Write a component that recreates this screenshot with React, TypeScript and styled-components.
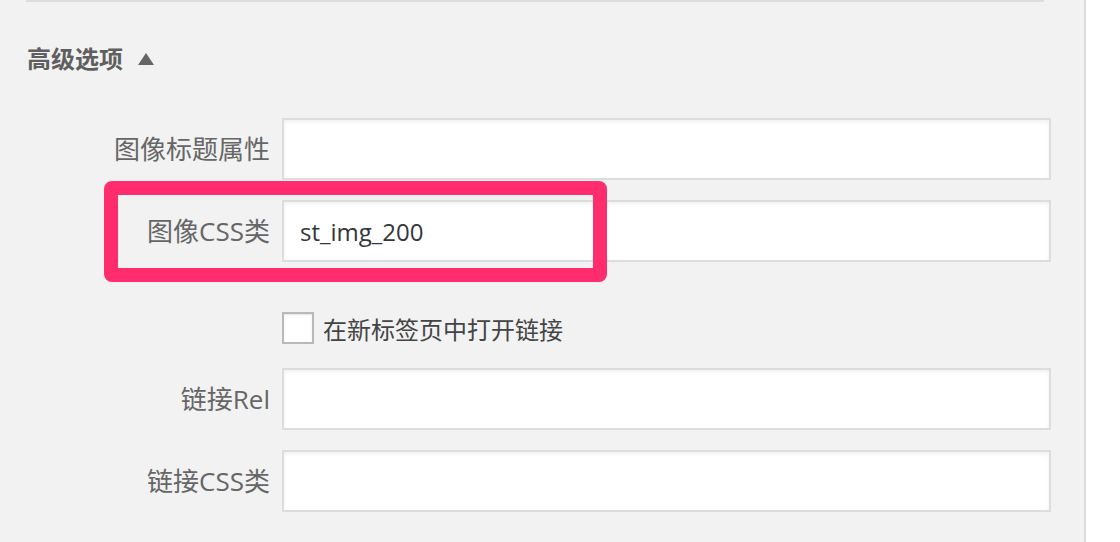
import React from "react";
import styled, { createGlobalStyle } from "styled-components";

const Global = createGlobalStyle`
  html, body { margin: 0; padding: 0; background: #fff; }
  body { font-family: "Open Sans", "Noto Sans CJK SC", sans-serif; }
  * { box-sizing: border-box; }
`;

const Page = styled.div`
  display: flex;
  width: 1120px;
  height: 542px;
  overflow: hidden;
  background: #fff;
`;

const Panel = styled.div`
  width: 1086px;
  flex: none;
  background: #f2f2f2;
  border-right: 2px solid #dddddd;
  padding: 0 0 0 26px;
  display: flex;
  flex-direction: column;
`;

const Divider = styled.div`
  width: 1018px;
  height: 2px;
  background: #dddddd;
`;

const Heading = styled.h3`
  margin: 45px 0 0 1px;
  display: flex;
  align-items: center;
  gap: 15px;
  font-size: 24px;
  line-height: 24px;
  font-weight: 700;
  color: #5f5f5f;
`;

const Triangle = styled.span`
  width: 0;
  height: 0;
  border-left: 8px solid transparent;
  border-right: 8px solid transparent;
  border-bottom: 12px solid #666;
  margin-top: -1px;
`;

const Form = styled.div`
  margin-top: 47px;
  display: flex;
  flex-direction: column;
`;

const Row = styled.div<{ $top: number }>`
  position: relative;
  display: grid;
  grid-template-columns: 244px 769px;
  column-gap: 12px;
  align-items: center;
  margin-top: ${(p) => p.$top}px;
`;

const Label = styled.label`
  text-align: right;
  font-size: 26px;
  line-height: 30px;
  color: #666;
`;

const Input = styled.div`
  height: 62px;
  background: #fff;
  border: 2px solid #dddddd;
  box-shadow: inset 0 2px 4px rgba(0, 0, 0, 0.06);
  display: flex;
  align-items: center;
  padding: 0 16px;
  font-size: 24px;
  color: #32373c;
`;

const CheckRow = styled.div`
  grid-column: 2;
  display: flex;
  align-items: center;
  gap: 9px;
  height: 32px;
`;

const Checkbox = styled.span`
  width: 32px;
  height: 32px;
  background: #fff;
  border: 2px solid #b9b9b9;
  box-shadow: inset 0 1px 2px rgba(0, 0, 0, 0.1);
`;

const CheckLabel = styled.span`
  font-size: 24px;
  line-height: 26px;
  color: #444;
  margin-top: 3px;
`;

const Highlight = styled.div`
  position: absolute;
  left: 78px;
  top: -19px;
  width: 503px;
  height: 101px;
  border: 14px solid #ff2d6e;
  border-radius: 8px;
  pointer-events: none;
`;

export default function App() {
  return (
    <>
      <Global />
      <Page>
        <Panel>
          <Divider />
          <Heading>
            高级选项
            <Triangle />
          </Heading>
          <Form>
            <Row $top={0}>
              <Label>图像标题属性</Label>
              <Input />
            </Row>
            <Row $top={20}>
              <Label>图像CSS类</Label>
              <Input>st_img_200</Input>
              <Highlight />
            </Row>
            <Row $top={50}>
              <CheckRow>
                <Checkbox />
                <CheckLabel>在新标签页中打开链接</CheckLabel>
              </CheckRow>
            </Row>
            <Row $top={24}>
              <Label>链接Rel</Label>
              <Input />
            </Row>
            <Row $top={20}>
              <Label>链接CSS类</Label>
              <Input />
            </Row>
          </Form>
        </Panel>
      </Page>
    </>
  );
}
